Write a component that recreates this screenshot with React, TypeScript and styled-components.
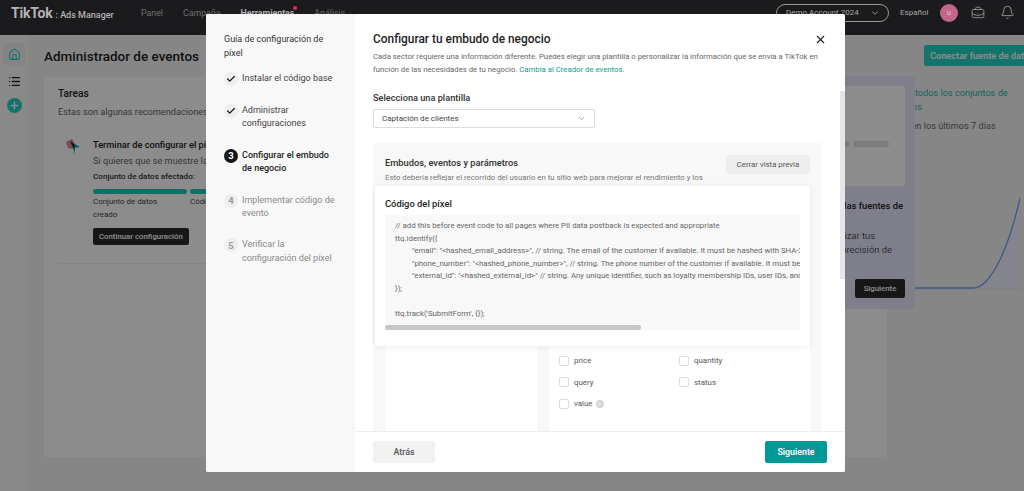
import { createGlobalStyle } from "styled-components";
import styled from "styled-components";
import { Bell, BriefcaseBusiness, Check, ChevronDown, House, List, Plus, X } from "lucide-react";

const GlobalStyle = createGlobalStyle`
  html, body {
    margin: 0;
    height: 100%;
    overflow: hidden;
    background: #f5f5f5;
  }
  body, button {
    font-family: "Roboto", "Liberation Sans", sans-serif;
  }
  * {
    box-sizing: border-box;
  }
`;

const Page = styled.div`
  width: 1024px;
  height: 491px;
  overflow: hidden;
  display: flex;
  flex-direction: column;
  position: relative;
`;

const TopBar = styled.header`
  height: 35px;
  flex-shrink: 0;
  position: relative;
  z-index: 2;
  background: #1b1b1d;
  color: #a8a8a8;
  display: flex;
  align-items: center;
  padding: 0 9px 10px 11px;
`;

const Logo = styled.div`
  display: flex;
  align-items: baseline;
  width: 130px;
  white-space: nowrap;
  color: #b4b4b4;
  b {
    font-size: 14px;
    font-weight: 700;
    letter-spacing: -0.2px;
    margin-right: 3px;
  }
  span {
    font-size: 9px;
    font-weight: 500;
  }
`;

const Nav = styled.nav`
  display: flex;
  gap: 20px;
  flex: 1;
`;

const NavItem = styled.a<{ $active?: boolean }>`
  position: relative;
  font-size: 8.8px;
  line-height: 12px;
  font-weight: ${(p) => (p.$active ? 700 : 400)};
  color: ${(p) => (p.$active ? "#b0b0b0" : "#6e6e6e")};
  sup {
    position: absolute;
    right: -3px;
    top: -1px;
    width: 4px;
    height: 4px;
    border-radius: 50%;
    background: #d8304f;
  }
`;

const AccountPill = styled.div`
  width: 113px;
  height: 18px;
  border: 1px solid #9a9a9a;
  border-radius: 9px;
  display: flex;
  align-items: center;
  justify-content: space-between;
  padding: 0 8px 0 9px;
  font-size: 8px;
`;

const Lang = styled.span`
  width: 29px;
  font-size: 8px;
  margin: 0 11px 0 11px;
`;

const Avatar = styled.div`
  width: 18px;
  height: 18px;
  border-radius: 50%;
  background: #c2678a;
  display: flex;
  align-items: center;
  justify-content: center;
  font-size: 7px;
  color: #e8c8d4;
  margin-right: 13px;
`;

const TopIcons = styled.div`
  display: flex;
  align-items: center;
  gap: 15px;
`;

const Body = styled.div`
  flex: 1;
  display: flex;
  min-height: 0;
`;

const SideRail = styled.aside`
  width: 28px;
  flex-shrink: 0;
  background: #fafafa;
  display: flex;
  flex-direction: column;
  align-items: center;
  padding-top: 8px;
  color: #222;
`;

const RailButton = styled.div`
  width: 22px;
  height: 22px;
  border-radius: 3px;
  background: #f0f0f0;
  color: #1fd4c4;
  display: flex;
  align-items: center;
  justify-content: center;
  margin-bottom: 9px;
`;

const RailPlain = styled.div`
  height: 14px;
  display: flex;
  align-items: center;
  margin-bottom: 10px;
`;

const RailAdd = styled.div`
  width: 15px;
  height: 15px;
  border-radius: 50%;
  background: #1fd4c4;
  color: #fff;
  display: flex;
  align-items: center;
  justify-content: center;
`;

const Main = styled.main`
  width: 1022px;
  flex-shrink: 0;
  padding: 10px 0 0 16px;
  position: relative;
`;

const TitleRow = styled.div`
  height: 21px;
  display: flex;
  align-items: center;
  justify-content: space-between;
  margin-bottom: 11px;
`;

const PageTitle = styled.h1`
  margin: 0;
  font-size: 13.5px;
  font-weight: 500;
  color: #222;
`;

const ConnectButton = styled.button`
  width: 126px;
  height: 21px;
  border: 0;
  border-radius: 2px;
  background: #22d4c2;
  color: #fff;
  font-size: 9.2px;
  font-weight: 600;
  padding: 0 0 0 6px;
  text-align: left;
  white-space: nowrap;
`;

const Columns = styled.div`
  display: flex;
  gap: 12px;
`;

const TasksCard = styled.section`
  width: 843px;
  height: 380px;
  background: #fff;
  border-radius: 3px;
  padding: 10px 14px;
`;

const TasksTitle = styled.h2`
  margin: 0 0 4px;
  font-size: 10.2px;
  line-height: 14px;
  font-weight: 500;
  color: #222;
`;

const Muted = styled.p`
  margin: 0;
  font-size: 9.2px;
  line-height: 14px;
  color: #666;
`;

const TaskRow = styled.div`
  display: flex;
  gap: 12px;
  padding: 19px 0 18px 7px;
  border-bottom: 1px solid #eee;
`;

const TaskBody = styled.div`
  flex: 1;
`;

const TaskTitle = styled.div`
  font-size: 9.2px;
  line-height: 14px;
  font-weight: 500;
  color: #222;
  margin-bottom: 2px;
`;

const Affected = styled.div`
  font-size: 8.1px;
  line-height: 12px;
  font-weight: 500;
  color: #333;
  margin: 2px 0 7px;
`;

const Steps = styled.div`
  display: flex;
  gap: 3px;
`;

const Step = styled.div`
  width: 94px;
  font-size: 7.9px;
  line-height: 12.5px;
  color: #444;
  &::before {
    content: "";
    display: block;
    height: 5px;
    border-radius: 3px;
    background: #1fcdbb;
    margin-bottom: 2px;
  }
`;

const DarkButton = styled.button`
  height: 17px;
  border: 0;
  border-radius: 2px;
  background: #2b2b2b;
  color: #fff;
  font-size: 7.8px;
  font-weight: 500;
  padding: 0 6px;
  white-space: nowrap;
  margin-top: 7px;
`;

const TourNext = styled(DarkButton)`
  width: 50px;
  height: 19px;
  padding: 0;
  margin-top: 0;
`;

const SideInfo = styled.section`
  flex: 1;
  padding-top: 9px;
`;

const SideLink = styled.a`
  display: block;
  font-size: 9.2px;
  line-height: 14px;
  color: #1ab5a6;
  width: 125px;
  margin-bottom: 5px;
`;

const Chart = styled.svg`
  display: block;
  margin: 63px 0 0 16px;
`;

const TourCard = styled.div`
  position: absolute;
  left: 600px;
  top: 41px;
  width: 287px;
  height: 233px;
  background: #e8e8ff;
  border-radius: 3px;
  padding: 10px;
`;

const TourPreview = styled.div`
  height: 100px;
  background: #fff;
  border-radius: 2px;
  margin-bottom: 13px;
  display: flex;
  flex-direction: column;
  align-items: flex-end;
  padding: 39px 16px 0 0;
  em {
    display: block;
    width: 6px;
    height: 4px;
    margin-right: 43px;
    background: #eeeeee;
  }
`;

const TourPills = styled.div`
  display: flex;
  gap: 3px;
  margin-top: 12px;
  i {
    display: block;
    height: 6px;
    width: 36px;
    border-radius: 3px;
    background: #e3e3e3;
  }
`;

const TourTitle = styled.div`
  text-align: right;
  padding-right: 2px;
  font-size: 9.4px;
  line-height: 14px;
  font-weight: 500;
  color: #222;
  margin-bottom: 16px;
`;

const TourText = styled.div<{ $inset: number }>`
  text-align: right;
  padding-right: ${(p) => p.$inset}px;
  font-size: 9.4px;
  line-height: 14px;
  color: #555;
`;

const TourFoot = styled.div`
  display: flex;
  justify-content: flex-end;
  margin-top: 22px;
`;

const Backdrop = styled.div`
  position: fixed;
  inset: 0;
  z-index: 1;
  background: rgba(0, 0, 0, 0.45);
`;

const ModalLayer = styled.div`
  position: fixed;
  inset: 0;
  z-index: 3;
  padding: 14px 0 0 206px;
`;

const Modal = styled.div`
  width: 639px;
  height: 458px;
  background: #fff;
  border-radius: 2px;
  display: flex;
  overflow: hidden;
`;

const Guide = styled.aside`
  width: 149px;
  flex-shrink: 0;
  background: #f8f8f8;
  padding: 18px 16px 0 18px;
`;

const GuideTitle = styled.div`
  font-size: 9px;
  line-height: 14px;
  color: #333;
  margin-bottom: 12px;
`;

const GuideStep = styled.div`
  display: flex;
  gap: 4px;
  margin-bottom: 18px;
`;

const Bullet = styled.div<{ $state: "done" | "current" | "todo" }>`
  width: 14px;
  height: 14px;
  flex-shrink: 0;
  border-radius: 50%;
  display: flex;
  align-items: center;
  justify-content: center;
  font-size: 9.5px;
  font-weight: 700;
  background: ${(p) => (p.$state === "current" ? "#161616" : "#eeeeee")};
  color: ${(p) => (p.$state === "current" ? "#fff" : p.$state === "done" ? "#161616" : "#999")};
`;

const GuideLabel = styled.div<{ $state: "done" | "current" | "todo" }>`
  font-size: 9px;
  line-height: 13.4px;
  font-weight: ${(p) => (p.$state === "current" ? 500 : 400)};
  color: ${(p) => (p.$state === "current" ? "#222" : p.$state === "done" ? "#444" : "#8a8a8a")};
`;

const Content = styled.div`
  flex: 1;
  display: flex;
  flex-direction: column;
  min-width: 0;
  position: relative;
`;

const Scroller = styled.div`
  flex: 1;
  min-height: 0;
  overflow: hidden;
  padding: 16px 23px 0 18px;
  position: relative;
`;

const ScrollThumb = styled.div`
  position: absolute;
  right: 0;
  top: 77px;
  width: 5px;
  height: 188px;
  background: #e6e6e6;
`;

const HeadRow = styled.div`
  display: flex;
  align-items: center;
  justify-content: space-between;
  margin-bottom: 2px;
  color: #222;
  svg {
    margin-right: -5px;
  }
`;

const ModalTitle = styled.h2`
  margin: 0;
  font-size: 11.9px;
  line-height: 18px;
  font-weight: 500;
  color: #222;
`;

const Intro = styled.p`
  margin: 0 0 15px;
  font-size: 7.75px;
  line-height: 13px;
  color: #666;
  a {
    color: #0f9c92;
  }
`;

const FieldLabel = styled.div`
  font-size: 9.2px;
  line-height: 14px;
  font-weight: 500;
  color: #333;
  margin-bottom: 4px;
`;

const Select = styled.div`
  width: 222px;
  height: 19px;
  border: 1px solid #ddd;
  border-radius: 2px;
  display: flex;
  align-items: center;
  justify-content: space-between;
  padding: 0 8px;
  font-size: 8px;
  color: #444;
  margin-bottom: 15px;
`;

const FunnelPanel = styled.div`
  background: #f8f8f8;
  border-radius: 2px;
  padding: 12px 12px 0;
  position: relative;
  height: 300px;
`;

const FunnelHead = styled.div`
  display: flex;
  justify-content: space-between;
  height: 16px;
`;

const FunnelTitle = styled.div`
  font-size: 9.3px;
  line-height: 14px;
  padding-top: 1px;
  font-weight: 500;
  color: #333;
`;

const GhostButton = styled.button`
  width: 84px;
  height: 19px;
  border: 0;
  border-radius: 2px;
  background: #eeeeee;
  color: #555;
  font-size: 7.8px;
  padding: 0;
`;

const FunnelText = styled.p`
  margin: 0;
  font-size: 7.8px;
  line-height: 13px;
  color: #777;
  white-space: nowrap;
`;

const FunnelColumns = styled.div`
  display: flex;
  gap: 12px;
  height: 250px;
  margin-top: 10px;
`;

const EventList = styled.div`
  width: 152px;
  background: #fff;
`;

const ParamPane = styled.div`
  flex: 1;
  background: #fff;
  padding: 161px 10px 0;
`;

const ParamGrid = styled.div`
  display: grid;
  grid-template-columns: 120px 1fr;
  row-gap: 10.5px;
`;

const ParamItem = styled.label`
  display: flex;
  align-items: center;
  gap: 5px;
  font-size: 7.9px;
  line-height: 11px;
  color: #555;
`;

const Box = styled.span`
  width: 10px;
  height: 10px;
  border: 1px solid #ddd;
  border-radius: 2px;
  background: #fff;
`;

const Hint = styled.span`
  width: 8px;
  height: 8px;
  margin-left: -2px;
  border-radius: 50%;
  background: #d4d4d4;
  color: #fff;
  font-size: 6px;
  line-height: 8px;
  text-align: center;
`;

const CodePopover = styled.div`
  position: absolute;
  left: 2px;
  top: 43px;
  width: 435px;
  height: 160px;
  background: #fff;
  border-radius: 2px;
  box-shadow: 0 1px 6px rgba(0, 0, 0, 0.08);
  padding: 11px 10px 0;
`;

const CodeTitle = styled.div`
  font-size: 9.4px;
  line-height: 14px;
  font-weight: 500;
  color: #222;
  margin-bottom: 4px;
`;

const CodeBlock = styled.div`
  position: relative;
  width: 415px;
  height: 115px;
  background: #f8f8f8;
  overflow: hidden;
  padding: 5px 10px;
`;

const CodeLine = styled.div<{ $indent?: boolean }>`
  font-size: 7.8px;
  line-height: 12.6px;
  height: 12.6px;
  color: #666;
  white-space: pre;
  padding-left: ${(p) => (p.$indent ? "17px" : "0")};
`;

const CodeScrollbar = styled.div`
  position: absolute;
  left: 0;
  bottom: 0;
  width: 256px;
  height: 5px;
  border-radius: 3px;
  background: #c6c6c6;
`;

const Footer = styled.footer`
  height: 41px;
  flex-shrink: 0;
  border-top: 1px solid #eee;
  display: flex;
  align-items: center;
  justify-content: space-between;
  padding: 0 18px;
  background: #fff;
`;

const FootButton = styled.button<{ $primary?: boolean }>`
  width: 62px;
  height: 22px;
  border: 0;
  border-radius: 2px;
  font-size: 8.8px;
  font-weight: ${(p) => (p.$primary ? 600 : 500)};
  background: ${(p) => (p.$primary ? "#009995" : "#f2f2f2")};
  color: ${(p) => (p.$primary ? "#fff" : "#555")};
`;

const guideSteps = [
  { key: "done", label: "Instalar el código base", state: "done" },
  { key: "done2", label: "Administrar configuraciones", state: "done" },
  { key: "3", label: "Configurar el embudo de negocio", state: "current" },
  { key: "4", label: "Implementar código de evento", state: "todo" },
  { key: "5", label: "Verificar la configuración del píxel", state: "todo" },
] as const;

const params = ["price", "quantity", "query", "status"];

const codeLines = [
  { text: "// add this before event code to all pages where PII data postback is expected and appropriate" },
  { text: "ttq.identify({" },
  { text: "\"email\": \"<hashed_email_address>\", // string. The email of the customer if available. It must be hashed with SHA-256 on the client side.", indent: true },
  { text: "\"phone_number\": \"<hashed_phone_number>\", // string. The phone number of the customer if available. It must be hashed with SHA-256.", indent: true },
  { text: "\"external_id\": \"<hashed_external_id>\" // string. Any unique identifier, such as loyalty membership IDs, user IDs, and external cookie IDs.", indent: true },
  { text: "});" },
  { text: " " },
  { text: "ttq.track('SubmitForm', {});" },
];

export default function App() {
  return (
    <Page>
      <GlobalStyle />
      <TopBar>
        <Logo>
          <b>TikTok</b>
          <span>: Ads Manager</span>
        </Logo>
        <Nav>
          <NavItem>Panel</NavItem>
          <NavItem>Campaña</NavItem>
          <NavItem $active>
            Herramientas<sup />
          </NavItem>
          <NavItem>Análisis</NavItem>
        </Nav>
        <AccountPill>
          Demo Account 2024
          <ChevronDown size={10} />
        </AccountPill>
        <Lang>Español</Lang>
        <Avatar>u</Avatar>
        <TopIcons>
          <BriefcaseBusiness size={14} strokeWidth={1.3} />
          <Bell size={15} strokeWidth={1.3} />
        </TopIcons>
      </TopBar>
      <Body>
        <SideRail>
          <RailButton>
            <House size={13} />
          </RailButton>
          <RailPlain>
            <List size={13} strokeWidth={2.4} />
          </RailPlain>
          <RailAdd>
            <Plus size={11} strokeWidth={3} />
          </RailAdd>
        </SideRail>
        <Main>
          <TitleRow>
            <PageTitle>Administrador de eventos</PageTitle>
            <ConnectButton>Conectar fuente de datos</ConnectButton>
          </TitleRow>
          <Columns>
            <TasksCard>
              <TasksTitle>Tareas</TasksTitle>
              <Muted>Estas son algunas recomendaciones para ti</Muted>
              <TaskRow>
                <svg width="16" height="17" viewBox="0 0 16 17">
                  <path d="M1 4 L7 1 L10 6 L8 11 L3 10 Z" fill="#f0808c" />
                  <path d="M5 3 L15 9 L10 10 L10 16 Z" fill="#19b5a6" />
                  <path d="M5 3 L10 7 L9 11 Z" fill="#14205a" />
                </svg>
                <TaskBody>
                  <TaskTitle>Terminar de configurar el píxel</TaskTitle>
                  <Muted>Si quieres que se muestre la información</Muted>
                  <Affected>Conjunto de datos afectado:</Affected>
                  <Steps>
                    <Step>
                      Conjunto de datos
                      <br />
                      creado
                    </Step>
                    <Step>Código base</Step>
                  </Steps>
                  <DarkButton>Continuar configuración</DarkButton>
                </TaskBody>
              </TaskRow>
            </TasksCard>
            <SideInfo>
              <SideLink>Ver todos los conjuntos de datos</SideLink>
              <Muted>Ya en los últimos 7 días</Muted>
              <Chart width="105" height="96" viewBox="0 0 105 96">
                <path d="M0 93 H105" stroke="#e4e4e4" />
                <path d="M0 92 H58 C75 92 93 55 105 2 V92 H0 Z" fill="#eef1ff" />
                <path d="M0 92 H58 C75 92 93 55 105 2" fill="none" stroke="#7f9cf5" strokeWidth="1.3" />
              </Chart>
            </SideInfo>
          </Columns>
          <TourCard>
            <TourPreview>
              <em />
              <TourPills>
                <i />
                <i />
              </TourPills>
            </TourPreview>
            <TourTitle>Administrar las fuentes de</TourTitle>
            <TourText $inset={30}>Para optimizar tus</TourText>
            <TourText $inset={13}>anuncios y la precisión de</TourText>
            <TourFoot>
              <TourNext>Siguiente</TourNext>
            </TourFoot>
          </TourCard>
        </Main>
      </Body>
      <Backdrop />
      <ModalLayer>
        <Modal>
          <Guide>
            <GuideTitle>Guía de configuración de píxel</GuideTitle>
            {guideSteps.map((step, i) => (
              <GuideStep key={step.key}>
                <Bullet $state={step.state}>
                  {step.state === "done" ? <Check size={10} strokeWidth={3} /> : i + 1}
                </Bullet>
                <GuideLabel $state={step.state}>{step.label}</GuideLabel>
              </GuideStep>
            ))}
          </Guide>
          <Content>
            <Scroller>
              <HeadRow>
                <ModalTitle>Configurar tu embudo de negocio</ModalTitle>
                <X size={13} strokeWidth={2} />
              </HeadRow>
              <Intro>
                Cada sector requiere una información diferente. Puedes elegir una plantilla o personalizar la
                información que se envía a TikTok en función de las necesidades de tu negocio.{" "}
                <a>Cambia al Creador de eventos.</a>
              </Intro>
              <FieldLabel>Selecciona una plantilla</FieldLabel>
              <Select>
                Captación de clientes
                <ChevronDown size={9} color="#888" />
              </Select>
              <FunnelPanel>
                <FunnelHead>
                  <FunnelTitle>Embudos, eventos y parámetros</FunnelTitle>
                  <GhostButton>Cerrar vista previa</GhostButton>
                </FunnelHead>
                <FunnelText>Esto debería reflejar el recorrido del usuario en tu sitio web para mejorar el rendimiento y los</FunnelText>
                <FunnelColumns>
                  <EventList />
                  <ParamPane>
                    <ParamGrid>
                      {params.map((param) => (
                        <ParamItem key={param}>
                          <Box />
                          {param}
                        </ParamItem>
                      ))}
                      <ParamItem>
                        <Box />
                        value
                        <Hint>?</Hint>
                      </ParamItem>
                    </ParamGrid>
                  </ParamPane>
                </FunnelColumns>
                <CodePopover>
                  <CodeTitle>Código del píxel</CodeTitle>
                  <CodeBlock>
                    {codeLines.map((line, i) => (
                      <CodeLine key={i} $indent={line.indent}>
                        {line.text}
                      </CodeLine>
                    ))}
                    <CodeScrollbar />
                  </CodeBlock>
                </CodePopover>
              </FunnelPanel>
              <ScrollThumb />
            </Scroller>
            <Footer>
              <FootButton>Atrás</FootButton>
              <FootButton $primary>Siguiente</FootButton>
            </Footer>
          </Content>
        </Modal>
      </ModalLayer>
    </Page>
  );
}
